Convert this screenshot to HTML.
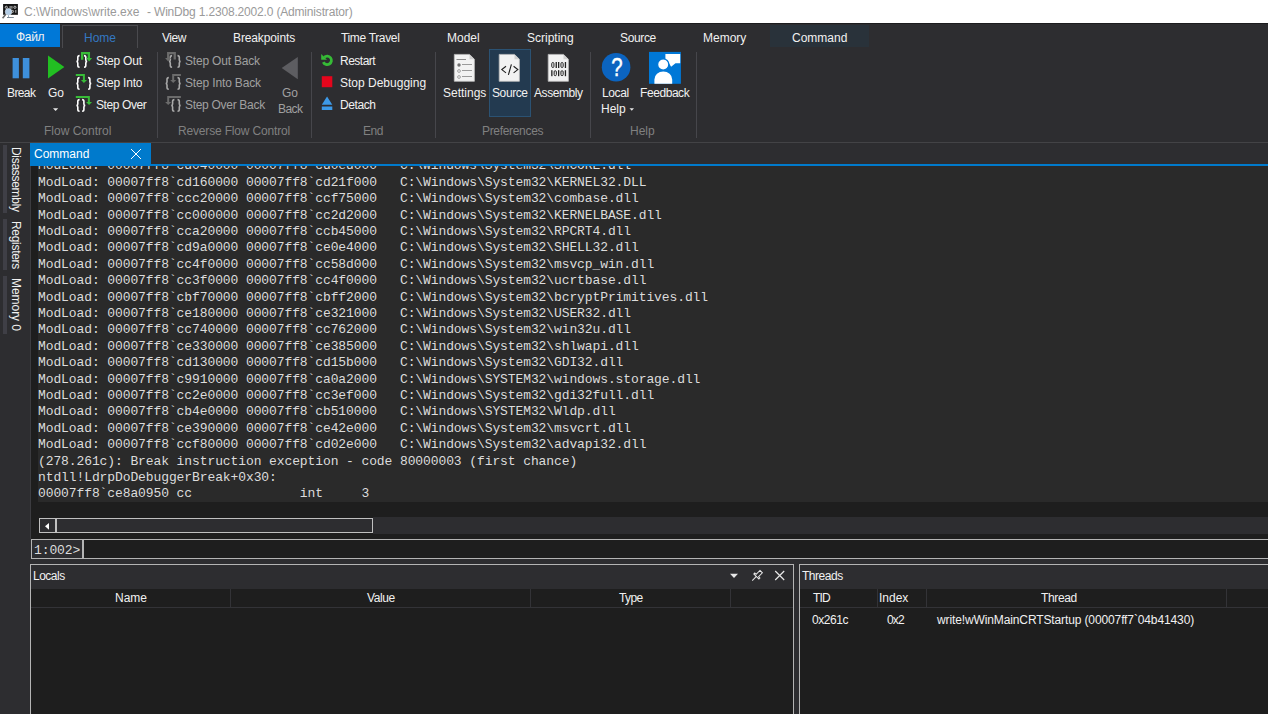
<!DOCTYPE html>
<html><head><meta charset="utf-8">
<style>
*{box-sizing:border-box}
html,body{margin:0;padding:0}
body{width:1268px;height:714px;overflow:hidden;position:relative;background:#2d2d30;font-family:"Liberation Sans",sans-serif;font-size:12px;color:#f1f1f1}
.a{position:absolute;white-space:nowrap}
.t{position:absolute;white-space:nowrap;line-height:16px;font-size:12px}
.g{color:#808080}
.d{color:#a0a0a0}
#title{left:0;top:0;width:1268px;height:23px;background:#fff}
#cmdtext{position:absolute;left:38px;top:166px;width:1230px;height:336px;background:#2a2a2a;overflow:hidden}
#cmdtext pre{margin:0;position:absolute;left:0;top:-7.7px;font-family:"Liberation Mono",monospace;font-size:13px;letter-spacing:-0.1px;line-height:16.4px;color:#dcdcdc}
</style></head><body>

<!-- title bar -->
<div class="a" id="title"></div>
<div class="t" style="left:24px;top:4px;color:#9a9a9a;font-size:12px;letter-spacing:0px">C:\Windows\write.exe</div>
<div class="t" style="left:147px;top:4px;color:#9a9a9a;font-size:12px;letter-spacing:-0.175px">- WinDbg 1.2308.2002.0 (Administrator)</div>
<div class="a" style="left:0;top:23px;width:1268px;height:1px;background:#1c1c1e"></div>

<!-- ribbon tabs -->
<div class="a" style="left:0;top:24px;width:60px;height:23px;background:#0078d7"></div>
<div class="t" style="left:16px;top:29px;letter-spacing:-0.3px">Файл</div>
<div class="a" style="left:62px;top:25px;width:76px;height:23px;border:1px solid #4a4a4e;border-bottom:none"></div>
<div class="t" style="left:84px;top:30px;color:#3478c2">Home</div>
<div class="t" style="left:162px;top:30px;letter-spacing:-0.5px">View</div>
<div class="t" style="left:233px;top:30px;letter-spacing:-0.12px">Breakpoints</div>
<div class="t" style="left:341px;top:30px;letter-spacing:-0.34px">Time Travel</div>
<div class="t" style="left:447px;top:30px">Model</div>
<div class="t" style="left:527px;top:30px">Scripting</div>
<div class="t" style="left:620px;top:30px;letter-spacing:-0.36px">Source</div>
<div class="t" style="left:703px;top:30px">Memory</div>
<div class="a" style="left:770px;top:25px;width:99px;height:22px;background:#29323a"></div>
<div class="t" style="left:792px;top:30px">Command</div>

<!-- ribbon separators -->
<div class="a" style="left:157px;top:52px;width:1px;height:86px;background:#46464b"></div>
<div class="a" style="left:311px;top:52px;width:1px;height:86px;background:#46464b"></div>
<div class="a" style="left:435px;top:52px;width:1px;height:86px;background:#46464b"></div>
<div class="a" style="left:590px;top:52px;width:1px;height:86px;background:#46464b"></div>
<div class="a" style="left:696px;top:52px;width:1px;height:86px;background:#46464b"></div>

<!-- ribbon labels -->
<div class="t" style="left:7px;top:85px;letter-spacing:-0.6px">Break</div>
<div class="t" style="left:48px;top:85px">Go</div>
<div class="t" style="left:96px;top:53px;letter-spacing:-0.2px">Step Out</div>
<div class="t" style="left:96px;top:75px;letter-spacing:-0.2px">Step Into</div>
<div class="t" style="left:96px;top:97px;letter-spacing:-0.4px">Step Over</div>
<div class="t d" style="left:185px;top:53px;letter-spacing:-0.2px">Step Out Back</div>
<div class="t d" style="left:185px;top:75px;letter-spacing:-0.15px">Step Into Back</div>
<div class="t d" style="left:185px;top:97px;letter-spacing:-0.3px">Step Over Back</div>
<div class="t d" style="left:282px;top:85px">Go</div>
<div class="t d" style="left:278px;top:101px;letter-spacing:-0.55px">Back</div>
<div class="t" style="left:340px;top:53px;letter-spacing:-0.5px">Restart</div>
<div class="t" style="left:340px;top:75px">Stop Debugging</div>
<div class="t" style="left:340px;top:97px;letter-spacing:-0.4px">Detach</div>
<div class="a" style="left:489px;top:49px;width:42px;height:68px;background:#233a50;border:1px solid #2b5273"></div>
<div class="t" style="left:443px;top:85px">Settings</div>
<div class="t" style="left:492px;top:85px;letter-spacing:-0.4px">Source</div>
<div class="t" style="left:534px;top:85px;letter-spacing:-0.43px">Assembly</div>
<div class="t" style="left:602px;top:85px;letter-spacing:-0.37px">Local</div>
<div class="t" style="left:601px;top:101px">Help</div>
<div class="t" style="left:640px;top:85px;letter-spacing:-0.43px">Feedback</div>

<div class="t g" style="left:44px;top:123px">Flow Control</div>
<div class="t g" style="left:178px;top:123px;letter-spacing:-0.17px">Reverse Flow Control</div>
<div class="t g" style="left:363px;top:123px;letter-spacing:-0.5px">End</div>
<div class="t g" style="left:482px;top:123px;letter-spacing:-0.32px">Preferences</div>
<div class="t g" style="left:630px;top:123px">Help</div>

<!-- doc area top line -->
<div class="a" style="left:0;top:142px;width:1268px;height:1px;background:#434346"></div>

<!-- left vertical tabs -->
<div class="a" style="left:3px;top:145px;width:4px;height:68px;background:#3f3f46"></div>
<div class="a" style="left:3px;top:219px;width:4px;height:51px;background:#3f3f46"></div>
<div class="a" style="left:3px;top:276px;width:4px;height:57.5px;background:#3f3f46"></div>
<div class="t" style="left:23.5px;top:147px;transform:rotate(90deg);transform-origin:0 0;letter-spacing:-0.3px">Disassembly</div>
<div class="t" style="left:23.5px;top:221px;transform:rotate(90deg);transform-origin:0 0;letter-spacing:-0.3px">Registers</div>
<div class="t" style="left:23.5px;top:278px;transform:rotate(90deg);transform-origin:0 0;letter-spacing:-0.05px">Memory 0</div>

<!-- command tab -->
<div class="a" style="left:30px;top:143px;width:121px;height:21px;background:#007acc"></div>
<div class="t" style="left:34px;top:146px;color:#fff">Command</div>
<div class="a" style="left:30px;top:164px;width:1238px;height:2px;background:#007acc"></div>

<!-- command window -->
<div class="a" style="left:30px;top:166px;width:1238px;height:373px;background:#1e1e1e"></div>
<div class="a" style="left:30px;top:166px;width:1px;height:373px;background:#3c3c40"></div>
<div id="cmdtext"><pre>ModLoad: 00007ff8`cd040000 00007ff8`cd0ed000   C:\Windows\System32\SHCORE.dll
ModLoad: 00007ff8`cd160000 00007ff8`cd21f000   C:\Windows\System32\KERNEL32.DLL
ModLoad: 00007ff8`ccc20000 00007ff8`ccf75000   C:\Windows\System32\combase.dll
ModLoad: 00007ff8`cc000000 00007ff8`cc2d2000   C:\Windows\System32\KERNELBASE.dll
ModLoad: 00007ff8`cca20000 00007ff8`ccb45000   C:\Windows\System32\RPCRT4.dll
ModLoad: 00007ff8`cd9a0000 00007ff8`ce0e4000   C:\Windows\System32\SHELL32.dll
ModLoad: 00007ff8`cc4f0000 00007ff8`cc58d000   C:\Windows\System32\msvcp_win.dll
ModLoad: 00007ff8`cc3f0000 00007ff8`cc4f0000   C:\Windows\System32\ucrtbase.dll
ModLoad: 00007ff8`cbf70000 00007ff8`cbff2000   C:\Windows\System32\bcryptPrimitives.dll
ModLoad: 00007ff8`ce180000 00007ff8`ce321000   C:\Windows\System32\USER32.dll
ModLoad: 00007ff8`cc740000 00007ff8`cc762000   C:\Windows\System32\win32u.dll
ModLoad: 00007ff8`ce330000 00007ff8`ce385000   C:\Windows\System32\shlwapi.dll
ModLoad: 00007ff8`cd130000 00007ff8`cd15b000   C:\Windows\System32\GDI32.dll
ModLoad: 00007ff8`c9910000 00007ff8`ca0a2000   C:\Windows\SYSTEM32\windows.storage.dll
ModLoad: 00007ff8`cc2e0000 00007ff8`cc3ef000   C:\Windows\System32\gdi32full.dll
ModLoad: 00007ff8`cb4e0000 00007ff8`cb510000   C:\Windows\SYSTEM32\Wldp.dll
ModLoad: 00007ff8`ce390000 00007ff8`ce42e000   C:\Windows\System32\msvcrt.dll
ModLoad: 00007ff8`ccf80000 00007ff8`cd02e000   C:\Windows\System32\advapi32.dll
(278.261c): Break instruction exception - code 80000003 (first chance)
ntdll!LdrpDoDebuggerBreak+0x30:
00007ff8`ce8a0950 cc              int     3</pre></div>

<!-- scrollbar -->
<div class="a" style="left:373px;top:517px;width:895px;height:17px;background:#2d2d30"></div>
<div class="a" style="left:39px;top:518px;width:334px;height:15px;background:#2d2d30;border:1px solid #c0c0c0"></div>
<div class="a" style="left:55px;top:518px;width:2px;height:15px;background:#c0c0c0"></div>

<!-- input -->
<div class="a" style="left:31px;top:539px;width:1237px;height:20px;background:#1e1e1e;border:1px solid #b4b4b4;border-right:none"></div>
<div class="a" style="left:32px;top:540px;width:52px;height:18px;background:#2d2d30;border-right:2px solid #b4b4b4"></div>
<div class="t" style="left:34px;top:543px;font-family:'Liberation Mono',monospace;font-size:13px;letter-spacing:-0.1px;color:#dcdcdc">1:002&gt;</div>

<!-- locals -->
<div class="a" style="left:30px;top:564px;width:764px;height:150px;background:#1e1e1e;border:1px solid #b4b4b4;border-bottom:none"></div>
<div class="a" style="left:31px;top:565px;width:762px;height:24px;background:#2d2d30"></div>
<div class="t" style="left:33px;top:568px;letter-spacing:-0.5px">Locals</div>
<div class="a" style="left:31px;top:607px;width:762px;height:1px;background:#333337"></div>
<div class="t" style="left:115px;top:590px">Name</div>
<div class="t" style="left:367px;top:590px;letter-spacing:-0.4px">Value</div>
<div class="t" style="left:619px;top:590px;letter-spacing:-0.6px">Type</div>
<div class="a" style="left:230px;top:589px;width:1px;height:18px;background:#333337"></div>
<div class="a" style="left:530px;top:589px;width:1px;height:18px;background:#333337"></div>
<div class="a" style="left:730px;top:589px;width:1px;height:18px;background:#333337"></div>

<!-- threads -->
<div class="a" style="left:799px;top:564px;width:469px;height:150px;background:#1e1e1e;border:1px solid #b4b4b4;border-bottom:none;border-right:none"></div>
<div class="a" style="left:800px;top:565px;width:468px;height:24px;background:#2d2d30"></div>
<div class="t" style="left:802px;top:568px;letter-spacing:-0.47px">Threads</div>
<div class="a" style="left:800px;top:607px;width:468px;height:1px;background:#333337"></div>
<div class="t" style="left:813px;top:590px;letter-spacing:-0.8px">TID</div>
<div class="t" style="left:879px;top:590px">Index</div>
<div class="t" style="left:1041px;top:590px;letter-spacing:-0.36px">Thread</div>
<div class="a" style="left:877px;top:589px;width:1px;height:18px;background:#333337"></div>
<div class="a" style="left:926px;top:589px;width:1px;height:18px;background:#333337"></div>
<div class="a" style="left:1226px;top:589px;width:1px;height:18px;background:#333337"></div>
<div class="t" style="left:812px;top:612px;letter-spacing:-0.44px">0x261c</div>
<div class="t" style="left:887px;top:612px;letter-spacing:-0.8px">0x2</div>
<div class="t" style="left:937px;top:612px;letter-spacing:-0.12px">write!wWinMainCRTStartup (00007ff7`04b41430)</div>

<!--ICONS--><svg class="a" style="left:0;top:0" width="1268" height="714" viewBox="0 0 1268 714">
<rect x="3.1" y="4" width="14.8" height="10.8" fill="#161616"/>
<g stroke="#cfcfcf" stroke-width="0.9" fill="none"><circle cx="6.3" cy="7.3" r="1.1"/><circle cx="14.9" cy="7.3" r="1.1"/><circle cx="12.6" cy="11.4" r="1"/></g>
<g stroke="#cfcfcf" stroke-width="0.9"><line x1="10.1" y1="6" x2="10.1" y2="8.7"/><line x1="11.9" y1="6" x2="11.9" y2="8.7"/><line x1="15.8" y1="10" x2="15.8" y2="12.8"/></g>
<line x1="7" y1="17.5" x2="13.8" y2="17.5" stroke="#7d8a96" stroke-width="1"/>
<line x1="8.5" y1="14.5" x2="8.5" y2="17" stroke="#9aa8b5" stroke-width="1"/>
<line x1="5.6" y1="14.6" x2="2.6" y2="18.2" stroke="#6a6a6a" stroke-width="1.6"/>
<circle cx="8.5" cy="11.8" r="3.3" fill="#b3cde6" stroke="#dbe6f0" stroke-width="0.6"/>
<rect x="12.6" y="58" width="6.3" height="20.3" fill="#3e90dc"/>
<rect x="22.8" y="58" width="6.6" height="20.3" fill="#3e90dc"/>
<polygon points="48,55.5 64.4,66.9 48,78.4" fill="#22bf22"/>
<polygon points="53,108.3 58.2,108.3 55.6,111" fill="#e6e6e6"/>
<path d="M79.60,55.60 Q77.80,55.60 77.80,57.30 L77.80,60.10 Q77.80,61.50 76.40,61.50 Q77.80,61.50 77.80,62.90 L77.80,65.60 Q77.80,67.30 79.60,67.30" stroke="#ffffff" stroke-width="1.6" fill="none"/>
<path d="M84.00,55.60 Q85.80,55.60 85.80,57.30 L85.80,60.10 Q85.80,61.50 87.20,61.50 Q85.80,61.50 85.80,62.90 L85.80,65.60 Q85.80,67.30 84.00,67.30" stroke="#ffffff" stroke-width="1.6" fill="none"/>
<path d="M82.15,59.8 V53.1 H88.9 V58.2" stroke="#38bc38" stroke-width="2.3" fill="none"/>
<polygon points="86.2,58 92.1,58 89.15,61.6" fill="#38bc38"/>
<path d="M79.60,77.60 Q77.80,77.60 77.80,79.30 L77.80,82.10 Q77.80,83.50 76.40,83.50 Q77.80,83.50 77.80,84.90 L77.80,87.60 Q77.80,89.30 79.60,89.30" stroke="#ffffff" stroke-width="1.6" fill="none"/>
<path d="M88.10,77.60 Q89.90,77.60 89.90,79.30 L89.90,82.10 Q89.90,83.50 91.30,83.50 Q89.90,83.50 89.90,84.90 L89.90,87.60 Q89.90,89.30 88.10,89.30" stroke="#ffffff" stroke-width="1.6" fill="none"/>
<path d="M75.8,75 H83.9 V80.3" stroke="#38bc38" stroke-width="2" fill="none"/>
<polygon points="80.9,80 87,80 83.95,83" fill="#38bc38"/>
<path d="M79.60,99.60 Q77.80,99.60 77.80,101.30 L77.80,104.10 Q77.80,105.50 76.40,105.50 Q77.80,105.50 77.80,106.90 L77.80,109.60 Q77.80,111.30 79.60,111.30" stroke="#ffffff" stroke-width="1.6" fill="none"/>
<path d="M82.10,99.60 Q83.90,99.60 83.90,101.30 L83.90,104.10 Q83.90,105.50 85.30,105.50 Q83.90,105.50 83.90,106.90 L83.90,109.60 Q83.90,111.30 82.10,111.30" stroke="#ffffff" stroke-width="1.6" fill="none"/>
<path d="M75.8,97 H88.85 V102.2" stroke="#38bc38" stroke-width="2" fill="none"/>
<polygon points="86,102 92.1,102 89.05,105" fill="#38bc38"/>
<path d="M172.10,55.60 Q170.30,55.60 170.30,57.30 L170.30,60.10 Q170.30,61.50 168.90,61.50 Q170.30,61.50 170.30,62.90 L170.30,65.60 Q170.30,67.30 172.10,67.30" stroke="#a9a9a9" stroke-width="1.6" fill="none"/>
<path d="M177.50,55.60 Q179.30,55.60 179.30,57.30 L179.30,60.10 Q179.30,61.50 180.70,61.50 Q179.30,61.50 179.30,62.90 L179.30,65.60 Q179.30,67.30 177.50,67.30" stroke="#a9a9a9" stroke-width="1.6" fill="none"/>
<path d="M174.75,59.4 V53.1 H168.2 V58.2" stroke="#6b6b6b" stroke-width="2.3" fill="none"/>
<polygon points="165.1,58 171.2,58 168.15,61.4" fill="#6b6b6b"/>
<path d="M168.80,77.60 Q167.00,77.60 167.00,79.30 L167.00,82.10 Q167.00,83.50 165.60,83.50 Q167.00,83.50 167.00,84.90 L167.00,87.60 Q167.00,89.30 168.80,89.30" stroke="#a9a9a9" stroke-width="1.6" fill="none"/>
<path d="M177.50,77.60 Q179.30,77.60 179.30,79.30 L179.30,82.10 Q179.30,83.50 180.70,83.50 Q179.30,83.50 179.30,84.90 L179.30,87.60 Q179.30,89.30 177.50,89.30" stroke="#a9a9a9" stroke-width="1.6" fill="none"/>
<path d="M180.9,75 H173.15 V80.3" stroke="#6b6b6b" stroke-width="2" fill="none"/>
<polygon points="170.2,80 176.2,80 173.2,83" fill="#6b6b6b"/>
<path d="M174.40,99.60 Q172.60,99.60 172.60,101.30 L172.60,104.10 Q172.60,105.50 171.20,105.50 Q172.60,105.50 172.60,106.90 L172.60,109.60 Q172.60,111.30 174.40,111.30" stroke="#a9a9a9" stroke-width="1.6" fill="none"/>
<path d="M177.50,99.60 Q179.30,99.60 179.30,101.30 L179.30,104.10 Q179.30,105.50 180.70,105.50 Q179.30,105.50 179.30,106.90 L179.30,109.60 Q179.30,111.30 177.50,111.30" stroke="#a9a9a9" stroke-width="1.6" fill="none"/>
<path d="M180.9,97 H168.2 V102.2" stroke="#6b6b6b" stroke-width="2" fill="none"/>
<polygon points="165.1,102 171.3,102 168.2,105" fill="#6b6b6b"/>
<polygon points="297.8,56.9 281.7,68.1 297.8,79.3" fill="#5d5d61"/>
<path d="M324.2,57.3 A4.25,4.25 0 1 1 323.3,62.1" stroke="#36bb36" stroke-width="2.8" fill="none"/>
<polygon points="321.2,53.9 321.2,59.8 327,59.8" fill="#36bb36"/>
<rect x="321.8" y="76.2" width="10.5" height="11" fill="#e5051c"/>
<polygon points="327.05,96.6 332.3,104.7 321.8,104.7" fill="#3d9ae8"/>
<rect x="321.8" y="106.5" width="10.5" height="3.5" fill="#3d9ae8"/>
<path d="M454.3,54.4 H469.5 L474.4,59.3 V81.3 H454.3 Z" fill="#f2f2f2" stroke="#bdbdbd" stroke-width="0.8"/>
<path d="M469.5,54.4 V59.3 H474.4 Z" fill="#d0d0d0"/>
<line x1="456.5" y1="59.5" x2="466" y2="59.5" stroke="#8a8a8a" stroke-width="1"/>
<circle cx="459" cy="65" r="1.7" fill="#707070"/>
<circle cx="459" cy="71" r="1.4" fill="none" stroke="#9a9a9a" stroke-width="0.9"/>
<circle cx="459" cy="77" r="1.4" fill="none" stroke="#9a9a9a" stroke-width="0.9"/>
<line x1="462" y1="64.5" x2="472" y2="64.5" stroke="#9a9a9a" stroke-width="1"/>
<line x1="462" y1="70.5" x2="472" y2="70.5" stroke="#9a9a9a" stroke-width="1"/>
<line x1="462" y1="76.5" x2="472" y2="76.5" stroke="#9a9a9a" stroke-width="1"/>
<path d="M499.2,54.4 H514.5 L519.4,59.3 V81.3 H499.2 Z" fill="#f2f2f2" stroke="#bdbdbd" stroke-width="0.8"/>
<path d="M514.5,54.4 V59.3 H519.4 Z" fill="#d0d0d0"/>
<polyline points="506,66.3 501.8,69.6 506,72.9" stroke="#1e1e1e" stroke-width="1.1" fill="none"/>
<line x1="511.4" y1="64.3" x2="508.4" y2="74.8" stroke="#1e1e1e" stroke-width="1.1"/>
<polyline points="513.6,66.3 517.8,69.6 513.6,72.9" stroke="#1e1e1e" stroke-width="1.1" fill="none"/>
<path d="M548.2,54.4 H563.5 L568.4,59.3 V81.3 H548.2 Z" fill="#f2f2f2" stroke="#bdbdbd" stroke-width="0.8"/>
<path d="M563.5,54.4 V59.3 H568.4 Z" fill="#d0d0d0"/>
<rect x="551.75" y="62.55" width="2.20" height="4.90" rx="1.05" fill="none" stroke="#222222" stroke-width="1.0"/>
<rect x="555.60" y="62.00" width="1.30" height="6.00" fill="#222222"/>
<rect x="558.00" y="62.00" width="1.30" height="6.00" fill="#222222"/>
<rect x="560.95" y="62.55" width="2.20" height="4.90" rx="1.05" fill="none" stroke="#222222" stroke-width="1.0"/>
<rect x="564.80" y="62.00" width="1.30" height="6.00" fill="#222222"/>
<rect x="551.20" y="70.20" width="1.30" height="6.00" fill="#222222"/>
<rect x="554.15" y="70.75" width="2.20" height="4.90" rx="1.05" fill="none" stroke="#222222" stroke-width="1.0"/>
<rect x="558.00" y="70.20" width="1.30" height="6.00" fill="#222222"/>
<rect x="560.95" y="70.75" width="2.20" height="4.90" rx="1.05" fill="none" stroke="#222222" stroke-width="1.0"/>
<rect x="564.80" y="70.20" width="1.30" height="6.00" fill="#222222"/>
<circle cx="616.1" cy="67.2" r="14.3" fill="#0b64c0"/>
<text transform="translate(616.9,76.2) scale(0.8,1)" x="0" y="0" text-anchor="middle" font-family="Liberation Sans" font-size="25.5" fill="#fff" stroke="#fff" stroke-width="0.5">?</text>
<polygon points="629.5,108.3 634,108.3 631.75,110.8" fill="#e6e6e6"/>
<rect x="649" y="51.9" width="31.9" height="31.9" fill="#0078d7"/>
<polygon points="665.4,54 680.2,54 680.2,63.3 675.5,63.3 671.1,66.8 669,63.3 665.4,63.3" fill="#fff"/>
<path d="M654.4,83.8 V79.5 A8.9,8 0 0 1 672.2,79.5 V83.8 Z" fill="#fff"/>
<circle cx="663.2" cy="64.5" r="5.6" fill="#fff" stroke="#0078d7" stroke-width="1.3"/>
<path d="M131,149 L141,159 M141,149 L131,159" stroke="#fff" stroke-width="1"/>
<polygon points="49,523 49,529.7 45,526.35" fill="#fff"/>
<polygon points="730,573.8 738,573.8 734,578" fill="#e8e8e8"/>
<g transform="translate(757.2,575.6) rotate(45)" fill="none" stroke="#e8e8e8" stroke-width="1"><path d="M-1.7,-5.6 H1.7 V-0.2 H3.6 V1.2 H-3.6 V-0.2 H-1.7 Z"/><line x1="0" y1="1.2" x2="0" y2="7"/></g>
<path d="M775.2,571 L784.2,580 M784.2,571 L775.2,580" stroke="#e8e8e8" stroke-width="1.2"/>
</svg><!--/ICONS-->
</body></html>
